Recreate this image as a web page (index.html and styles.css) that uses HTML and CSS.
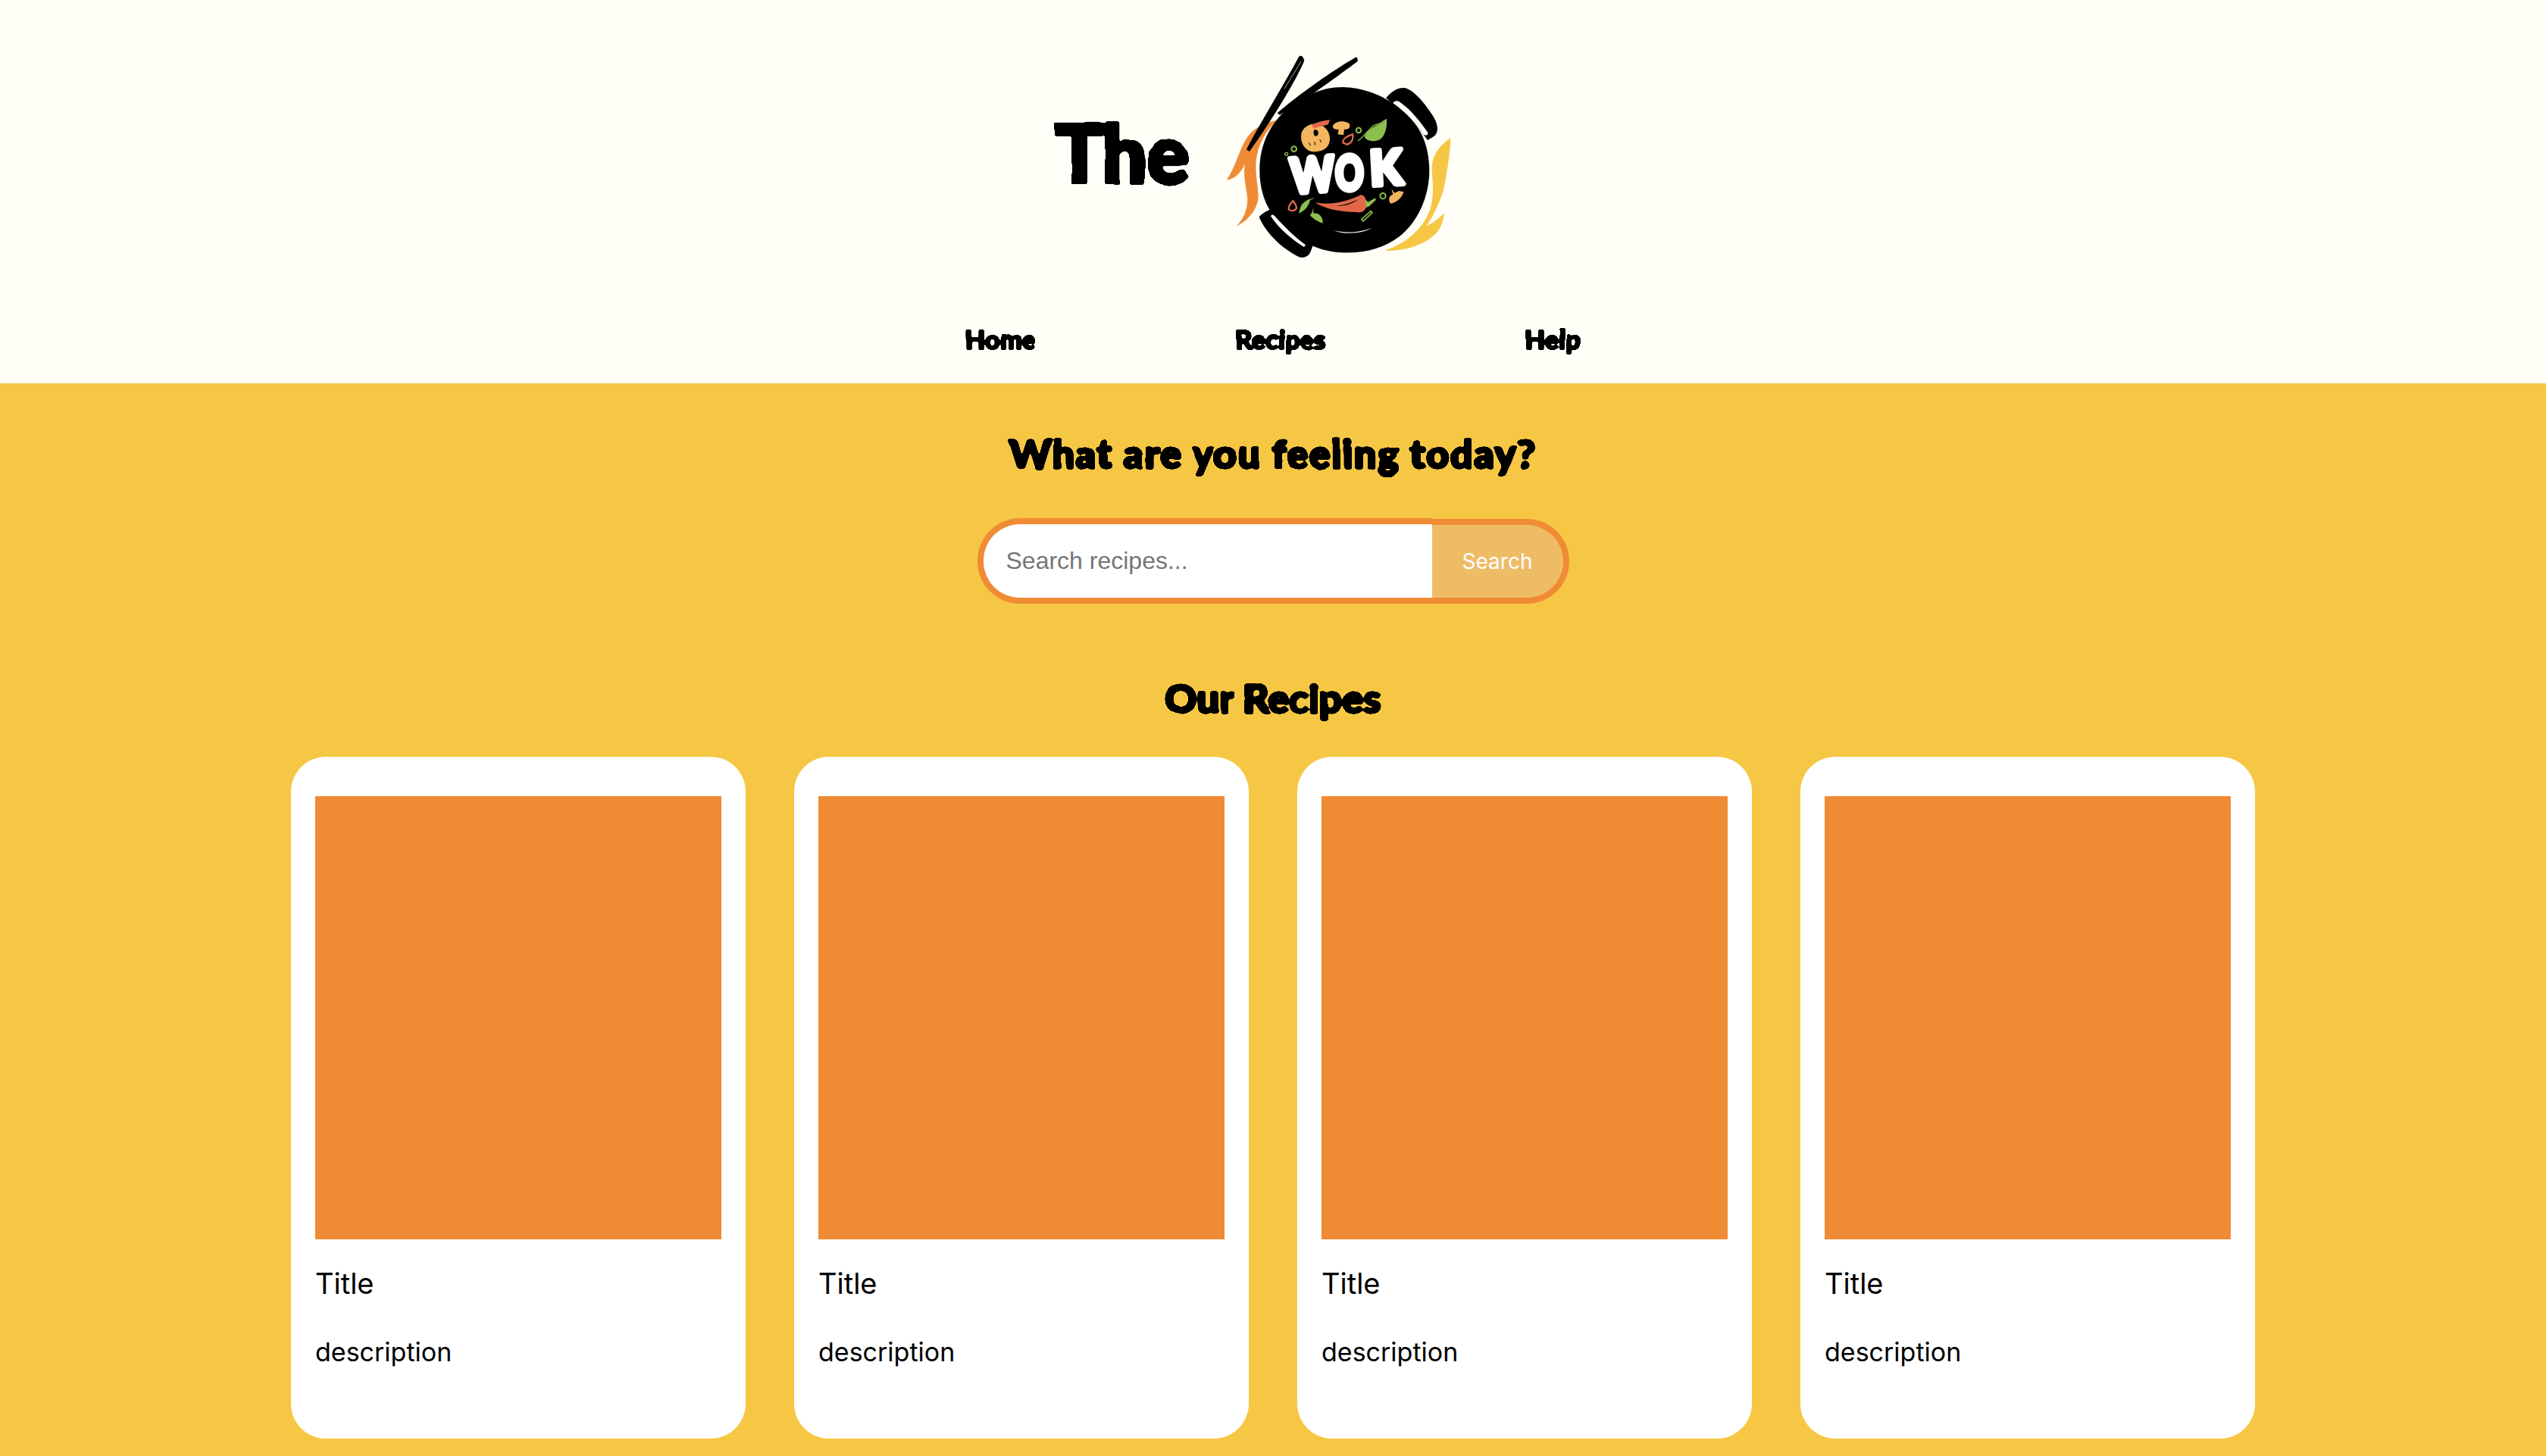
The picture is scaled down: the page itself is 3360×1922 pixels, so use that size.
FILE: index.html
```html
<!DOCTYPE html>
<html lang="en">
<head>
    <meta charset="UTF-8">
    <meta name="viewport" content="width=device-width, initial-scale=1.0">
    <title>The Wok</title>
    <link rel="stylesheet" href="styles.css">
</head>
<body>
    <!-- shared filter, gives the heading text its soft hand cut edge -->
    <svg class="defs" width="0" height="0">
        <filter id="rough" x="-5%" y="-10%" width="110%" height="120%" color-interpolation-filters="sRGB">
            <feTurbulence type="fractalNoise" baseFrequency="0.035" numOctaves="1" seed="4"/>
            <feDisplacementMap in="SourceGraphic" scale="4" xChannelSelector="R" yChannelSelector="G"/>
            <feGaussianBlur stdDeviation="1"/>
            <feColorMatrix values="0 0 0 0 0  0 0 0 0 0  0 0 0 0 0  0 0 0 10 -4"/>
        </filter>
    </svg>

    <!-- Header -->
    <header class="site-header">
        <div class="logo">
            <span class="logo-the">The</span>
            <svg class="logo-wok" viewBox="0 0 960 870" width="320" height="290">
                <!-- flames -->
                <path fill="#f08b35" d="M258 297C205 305 165 330 140 365C110 410 95 480 60 532C90 530 115 505 132 470C122 520 140 570 142 610C142 650 125 690 98 716C145 695 178 650 184 610C188 570 172 520 176 460C182 390 215 340 258 297Z"/>
                <path fill="#f6c745" d="M946 366C905 395 875 430 872 480C872 530 882 570 870 630C855 700 790 780 684 812C770 818 860 785 900 730C912 710 918 690 920 664C900 685 875 705 852 714C885 660 915 600 925 540C935 480 945 420 946 366Z"/>
                <!-- chopsticks -->
                <path fill="#000" d="M345 45C352 38 362 40 367 60C340 130 230 310 150 420L138 412C190 310 290 150 345 45Z"/>
                <path fill="#000" d="M565 50C572 43 580 48 578 62C510 115 380 210 270 275L260 268C350 190 480 100 565 50Z"/>
                <path fill="none" stroke="#fffff7" stroke-width="2" d="M355 62L288 172"/>
                <!-- pan -->
                <path fill="#000" d="M520 165C610 168 700 205 770 270C830 325 862 400 862 495C862 600 815 700 745 755C680 805 600 825 510 820C430 815 350 780 285 720C225 665 190 590 190 495C190 400 225 320 290 260C350 205 430 165 520 165Z"/>
                <path fill="#000" d="M690 208C710 185 735 165 765 168C800 175 850 235 880 285C897 315 900 345 880 360L855 375L800 300Z"/>
                <path fill="#000" d="M188 680C195 668 220 655 240 645L400 795C392 815 390 830 370 838C350 845 330 830 300 810C255 780 210 730 188 680Z"/>
                <path fill="#fffff7" d="M718 228C724 218 735 218 745 224C785 250 830 305 856 345C858 358 845 358 838 352C810 310 770 265 718 228Z"/>
                <path fill="#fffff7" d="M234 676C238 668 244 670 250 676C285 715 330 760 372 790L366 798C320 770 265 725 234 676Z"/>
                <path fill="#fffff7" d="M483 732C530 745 590 740 635 722C600 745 520 750 483 732Z"/>
                <!-- shrimp -->
                <path fill="#f4b55f" d="M395 312C440 305 470 335 468 375C465 410 430 425 395 420C365 412 350 380 355 350C360 330 375 318 395 312Z"/>
                <path fill="#e2674a" d="M395 315C415 305 445 297 468 295L462 312C445 320 425 320 405 330Z"/>
                <path fill="#000" d="M405 335C420 330 428 345 418 358C410 362 400 355 405 335Z"/>
                <path fill="none" stroke="#000" stroke-width="3" d="M385 385L392 396M408 382L410 395M428 372L434 384"/>
                <!-- mushrooms -->
                <path fill="#f4b55f" d="M480 318C490 298 530 295 545 310C552 325 540 335 525 332L522 355L500 352L503 332C490 335 478 330 480 318Z"/>
                <path fill="#f4b55f" d="M712 568L724 584L742 576L760 580C755 600 735 622 708 626C698 610 702 595 718 590Z"/>
                <!-- onion rings -->
                <path fill="none" stroke="#e2674a" stroke-width="7" d="M520 385C518 370 540 358 558 352C562 370 555 388 535 392Z"/>
                <path fill="none" stroke="#e2674a" stroke-width="7" d="M322 615C310 628 302 640 306 650C316 658 332 654 336 645C336 635 330 625 322 615Z"/>
                <!-- leaves -->
                <path fill="#8cbf4f" d="M693 290C650 315 610 340 605 360C610 380 650 385 670 370C690 350 695 320 693 290Z"/>
                <path fill="none" stroke="#000" stroke-width="3" d="M612 345C630 325 655 312 680 305"/>
                <path fill="none" stroke="#8cbf4f" stroke-width="4" d="M578 378C595 370 605 350 640 318C655 310 670 308 682 306"/>
                <path fill="#8cbf4f" d="M410 604C385 606 360 620 352 640L345 665C370 655 385 635 390 612Z"/>
                <path fill="#8cbf4f" d="M403 640C400 660 395 665 390 672C405 690 425 700 440 704C442 680 425 660 403 665Z"/>
                <!-- rings and bits -->
                <g fill="none" stroke="#8cbf4f">
                    <circle cx="582" cy="336" r="10" stroke-width="6"/>
                    <circle cx="326" cy="410" r="10" stroke-width="6"/>
                    <circle cx="296" cy="430" r="6" stroke-width="4"/>
                    <circle cx="678" cy="596" r="11" stroke-width="6"/>
                    <path stroke-width="5" d="M594 688L630 656L636 662L600 696Z"/>
                </g>
                <!-- chili -->
                <path fill="#e2674a" d="M410 622C470 635 545 615 590 592C610 592 615 620 612 640C605 660 590 664 570 660C520 660 450 650 410 622Z"/>
                <path fill="#000" d="M490 635C530 632 560 620 582 608C565 625 525 638 490 635Z"/>
                <path fill="#8cbf4f" d="M608 610L620 620L648 604L650 612L625 636L612 642Z"/>
                <!-- wok lettering, each letter placed on its own so the word climbs to the right -->
                <text class="logo-wok-text" x="312" y="580" textLength="174" lengthAdjust="spacingAndGlyphs" transform="rotate(-4 400 510)">W</text>
                <text class="logo-wok-text" x="490" y="572" textLength="112" lengthAdjust="spacingAndGlyphs">O</text>
                <text class="logo-wok-text" x="626" y="552" textLength="128" lengthAdjust="spacingAndGlyphs" transform="rotate(-3 690 480)">K</text>
            </svg>
        </div>
        <nav class="main-nav">
            <a href="#">Home</a>
            <a href="#">Recipes</a>
            <a href="#">Help</a>
        </nav>
    </header>

    <main class="content">
        <h2 class="feeling-title">What are you feeling today?</h2>
        <form class="search-form">
            <input class="search-input" type="text" placeholder="Search recipes...">
            <button class="search-button" type="button">Search</button>
        </form>

        <h2 class="recipes-title">Our Recipes</h2>
        <section class="recipe-grid">
            <article class="recipe-card">
                <div class="recipe-image"></div>
                <h3>Title</h3>
                <p>description</p>
            </article>
            <article class="recipe-card">
                <div class="recipe-image"></div>
                <h3>Title</h3>
                <p>description</p>
            </article>
            <article class="recipe-card">
                <div class="recipe-image"></div>
                <h3>Title</h3>
                <p>description</p>
            </article>
            <article class="recipe-card">
                <div class="recipe-image"></div>
                <h3>Title</h3>
                <p>description</p>
            </article>
        </section>
    </main>
</body>
</html>
```

FILE: styles.css
```css
/* General Styles */
body {
    margin: 0;
    background: #f6c745;
    color: #000;
    font-family: 'Inter', sans-serif;
    overflow: hidden;
}

.defs {
    display: block;
    position: absolute;
}

/* Header */
.site-header {
    height: 506px;
    box-sizing: border-box;
    padding-top: 60px;
    background: #fffff7;
}

.logo {
    display: flex;
    justify-content: center;
    padding-right: 48px;
    height: 290px;
}

.logo-the {
    margin: 88px 30px 0 0;
    font-family: 'Lato', sans-serif;
    font-weight: 900;
    font-size: 104px;
    line-height: 106px;
    -webkit-text-stroke: 5px #000;
    filter: url(#rough);
}

.logo-wok-text {
    font-family: 'Lato', sans-serif;
    font-weight: 900;
    font-size: 190px;
    fill: #fff;
    stroke: #fff;
    stroke-width: 20px;
    stroke-linejoin: round;
}

.main-nav {
    display: flex;
    justify-content: center;
    gap: 263px;
    padding-top: 76px;
}

.main-nav a {
    color: #000;
    text-decoration: none;
    font-family: 'Lato', sans-serif;
    font-weight: 900;
    font-size: 34px;
    line-height: 44px;
    letter-spacing: 0.3px;
    -webkit-text-stroke: 2px #000;
    filter: url(#rough);
}

/* Search */
.content {
    display: flex;
    flex-direction: column;
    align-items: center;
}

.feeling-title,
.recipes-title {
    margin: 0;
    font-family: 'Lato', sans-serif;
    font-weight: 900;
    font-size: 52px;
    line-height: 64px;
    -webkit-text-stroke: 3px #000;
    filter: url(#rough);
}

.feeling-title {
    margin-top: 60px;
    letter-spacing: 1.6px;
}

.search-form {
    display: flex;
    align-items: flex-start;
    margin-top: 54px;
}

.search-input {
    box-sizing: border-box;
    width: 600px;
    height: 113px;
    padding: 0 30px;
    background: #fff;
    border: 8px solid #f08b35;
    border-right: none;
    border-radius: 56px 0 0 56px;
    font-family: 'Liberation Sans', sans-serif;
    font-size: 32px;
    outline: none;
}

.search-input::placeholder {
    color: #757575;
}

.search-button {
    box-sizing: border-box;
    width: 181px;
    height: 112px;
    margin-top: 1px;
    padding: 0;
    background: #efbc66;
    border: 8px solid #f08b35;
    border-left: none;
    border-radius: 0 56px 56px 0;
    color: #fff;
    font-family: 'Inter', sans-serif;
    font-size: 28px;
}

.recipes-title {
    margin-top: 92px;
    letter-spacing: 0.4px;
}

/* Recipe Cards */
.recipe-grid {
    display: grid;
    grid-template-columns: repeat(4, 600px);
    gap: 64px;
    margin-top: 46px;
}

.recipe-card {
    box-sizing: border-box;
    height: 900px;
    padding: 52px 32px 0;
    background: #fff;
    border-radius: 46px;
}

.recipe-image {
    height: 585px;
    background: #f08b35;
}

.recipe-card h3 {
    margin: 33px 0 0;
    font-size: 38px;
    line-height: 50px;
    font-weight: 400;
}

.recipe-card p {
    margin: 46px 0 0;
    font-size: 34px;
    line-height: 40px;
}
```
